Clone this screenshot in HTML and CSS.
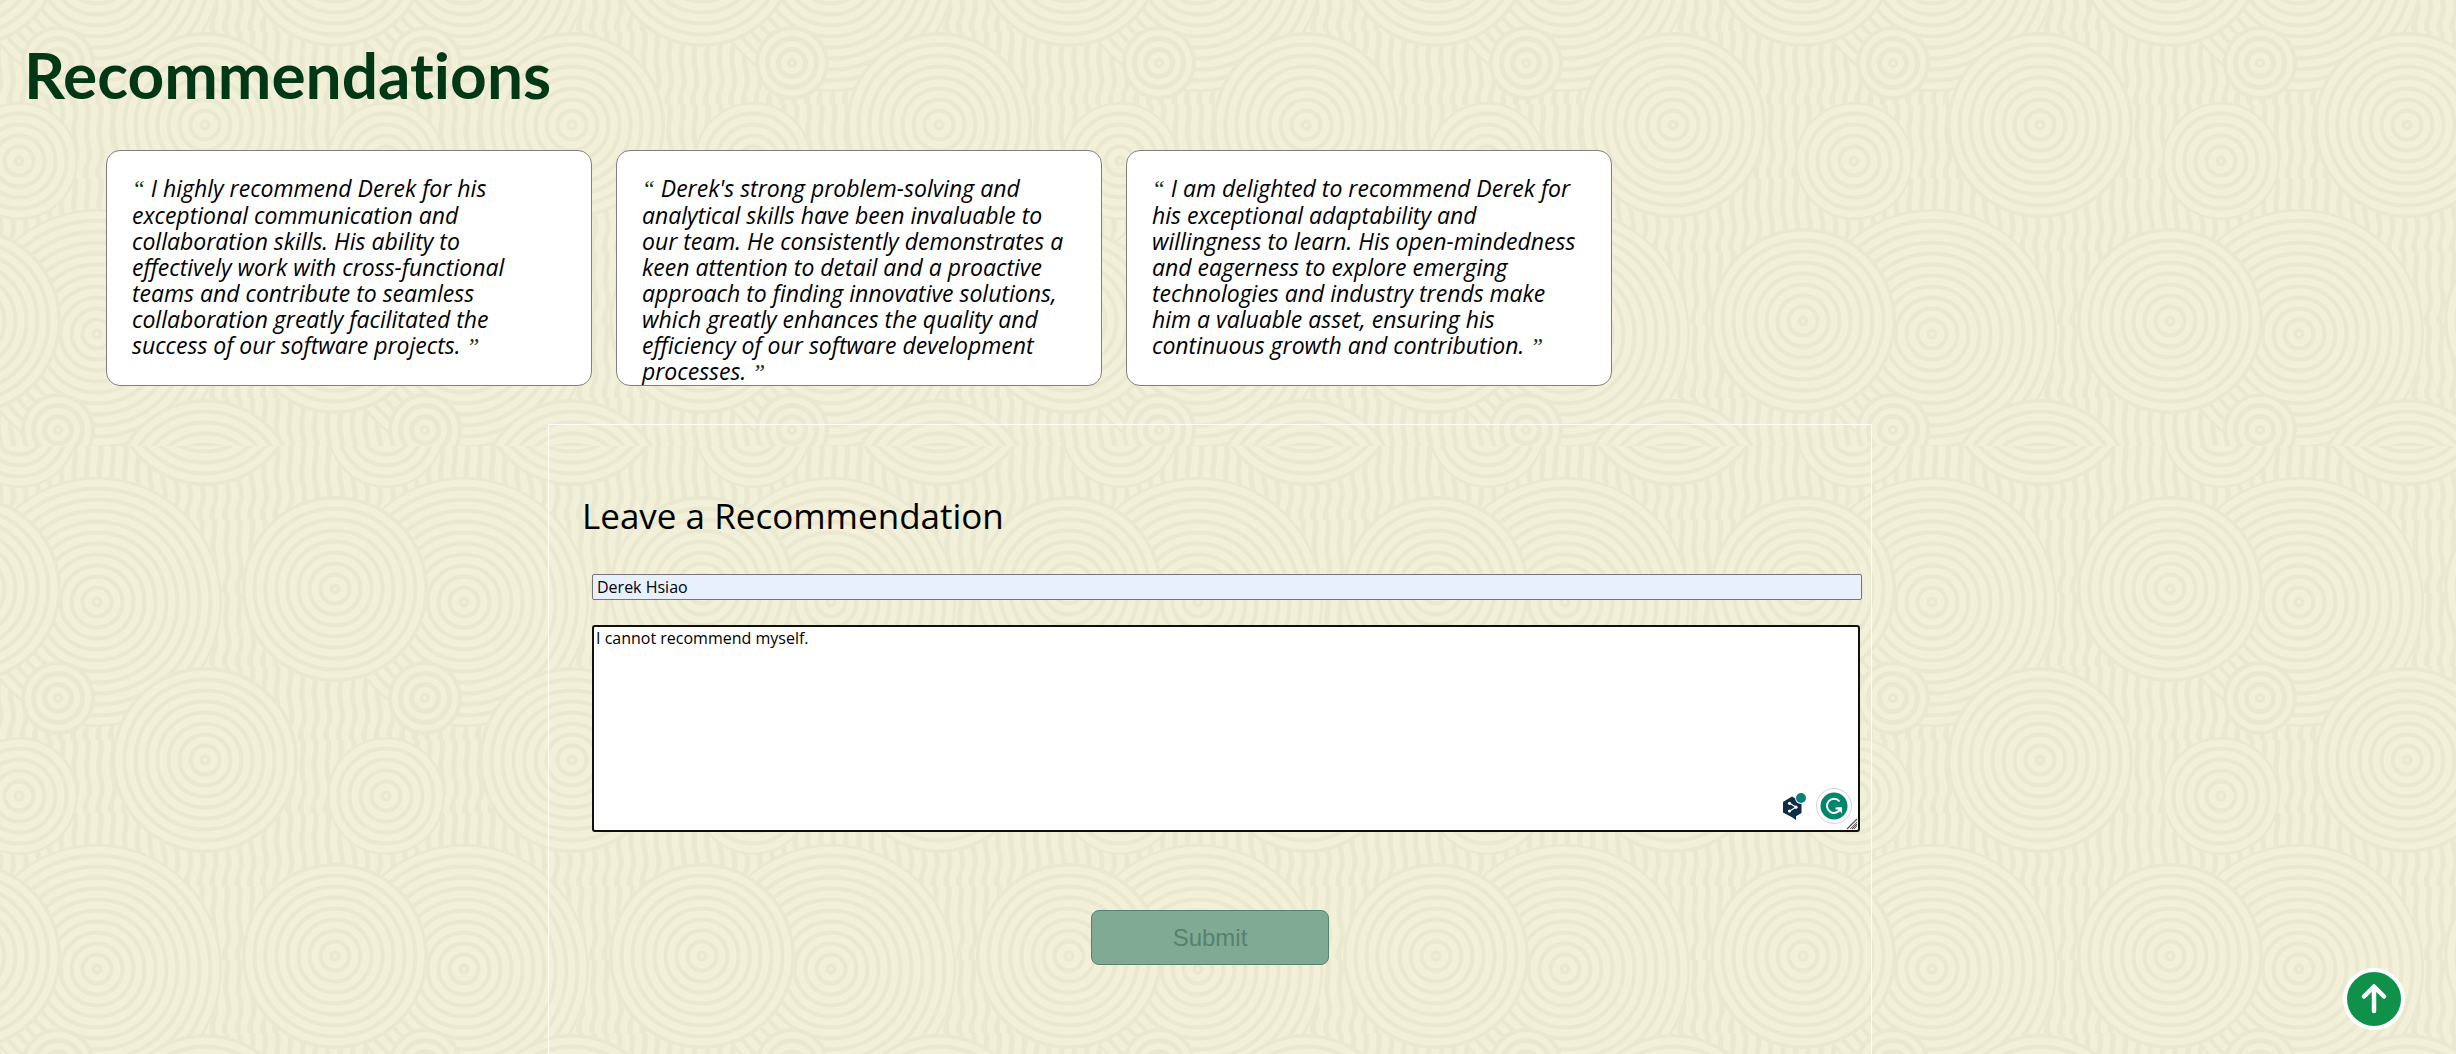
FILE: index.html
```
<!DOCTYPE html>
<html lang="en">
<head>
<meta charset="utf-8">
<meta name="viewport" content="width=device-width, initial-scale=1">
<title>Recommendations</title>
<link rel="stylesheet" href="styles.css">
</head>
<body>
<section class="recommendations">
  <h1 class="page-title">Recommendations</h1>
  <div class="card-row">
    <blockquote class="card"><span class="quote">“</span> I highly recommend Derek for his<br>exceptional communication and<br>collaboration skills. His ability to<br>effectively work with cross-functional<br>teams and contribute to seamless<br>collaboration greatly facilitated the<br>success of our software projects. <span class="quote">”</span></blockquote>
    <blockquote class="card"><span class="quote">“</span> Derek's strong problem-solving and<br>analytical skills have been invaluable to<br>our team. He consistently demonstrates a<br>keen attention to detail and a proactive<br>approach to finding innovative solutions,<br>which greatly enhances the quality and<br>efficiency of our software development<br>processes. <span class="quote">”</span></blockquote>
    <blockquote class="card"><span class="quote">“</span> I am delighted to recommend Derek for<br>his exceptional adaptability and<br>willingness to learn. His open-mindedness<br>and eagerness to explore emerging<br>technologies and industry trends make<br>him a valuable asset, ensuring his<br>continuous growth and contribution. <span class="quote">”</span></blockquote>
  </div>
</section>
<main class="form-area">
  <form class="form">
    <h2 class="form-title">Leave a Recommendation</h2>
    <div class="fields">
      <input class="field name" type="text" value="Derek Hsiao" aria-label="Name">
      <div class="message-box">
        <textarea class="field message" aria-label="Message">I cannot recommend myself.</textarea>
        <div class="assistants">
          <svg width="26" height="28" viewBox="0 0 26 28" aria-hidden="true">
            <path d="M11 4.500 20.500 10V21L15 24.200V28L11.500 25.600 2 20.600V10Z" fill="#0f2b46"/>
            <path d="M8 11 15 15 8 19.500" fill="none" stroke="#fff" stroke-width="1.200"/>
            <circle cx="8.500" cy="11.300" r="1.600" fill="#fff"/><circle cx="15" cy="15.200" r="1.600" fill="#fff"/><circle cx="8.500" cy="19" r="1.600" fill="#fff"/>
            <circle cx="20" cy="6" r="6" fill="#fff"/><circle cx="20" cy="6" r="5" fill="#0b8074"/>
          </svg>
          <svg width="38" height="38" viewBox="0 0 38 38" aria-hidden="true">
            <circle cx="19" cy="19" r="17.500" fill="#fff" stroke="#cfd2e0"/>
            <circle cx="19" cy="19" r="13.500" fill="#00856f"/>
            <path d="M24.500 14.500A7 7 0 1 0 25.500 21.500H20.500" fill="none" stroke="#fff" stroke-width="2"/>
            <path d="M21.500 20.500H27V26.500Z" fill="#fff"/>
          </svg>
        </div>
        <svg class="grip" width="12" height="12" viewBox="0 0 12 12" aria-hidden="true"><path d="M1 11 11 1M6 11 11 6" fill="none" stroke="#555" stroke-width="1.300"/></svg>
      </div>
    </div>
    <button class="submit" type="submit" disabled>Submit</button>
  </form>
</main>
<button class="to-top" type="button" aria-label="Back to top">
  <svg width="54" height="54" viewBox="0 0 54 54" aria-hidden="true">
    <path d="M27 39V15M17 24.500 27 14.500 37 24.500" fill="none" stroke="#fff" stroke-width="4.500" stroke-linecap="round" stroke-linejoin="round"/>
  </svg>
</button>
</body>
</html>
```
FILE: styles.css
```
:root {
  --tile: url("data:image/svg+xml,%3Csvg xmlns='http://www.w3.org/2000/svg' xmlns:xlink='http://www.w3.org/1999/xlink' width='367' height='367'%3E%3Cdefs%3E%3Cpattern id='w' width='12.655' height='73.4' patternUnits='userSpaceOnUse'%3E%3Cpath d='M5 -5Q7 8 5 18T6 40T5 60T5 80' fill='none' stroke='%23f2f0d8' stroke-width='7.5'/%3E%3C/pattern%3E%3Cg id='d'%3E%3Ccircle r='125' fill='%23eae8d0'/%3E%3Cg fill='none' stroke='%23f2f0d8' stroke-width='7'%3E%3Ccircle r='119'/%3E%3Ccircle r='108'/%3E%3Ccircle r='97'/%3E%3Ccircle r='86'/%3E%3Ccircle r='75'/%3E%3Ccircle r='64'/%3E%3Ccircle r='53'/%3E%3Ccircle r='42'/%3E%3Ccircle r='31'/%3E%3Ccircle r='20'/%3E%3Ccircle r='9'/%3E%3C/g%3E%3Ccircle r='2' fill='%23f2f0d8'/%3E%3C/g%3E%3Cg id='a'%3E%3Ccircle r='93' fill='%23eae8d0'/%3E%3Cg fill='none' stroke='%23f2f0d8' stroke-width='7'%3E%3Ccircle r='86'/%3E%3Ccircle r='75'/%3E%3Ccircle r='64'/%3E%3Ccircle r='53'/%3E%3Ccircle r='42'/%3E%3Ccircle r='31'/%3E%3Ccircle r='20'/%3E%3Ccircle r='9'/%3E%3C/g%3E%3Ccircle r='2' fill='%23f2f0d8'/%3E%3C/g%3E%3Cg id='b'%3E%3Ccircle r='59' fill='%23eae8d0'/%3E%3Cg fill='none' stroke='%23f2f0d8' stroke-width='7'%3E%3Ccircle r='53'/%3E%3Ccircle r='42'/%3E%3Ccircle r='31'/%3E%3Ccircle r='20'/%3E%3Ccircle r='9'/%3E%3C/g%3E%3Ccircle r='2' fill='%23f2f0d8'/%3E%3C/g%3E%3Cg id='s'%3E%3Ccircle r='37' fill='%23eae8d0'/%3E%3Cg fill='none' stroke='%23f2f0d8' stroke-width='6'%3E%3Ccircle r='30'/%3E%3Ccircle r='19'/%3E%3Ccircle r='8'/%3E%3C/g%3E%3Ccircle r='2' fill='%23f2f0d8'/%3E%3C/g%3E%3C/defs%3E%3Crect width='367' height='367' fill='%23eae8d0'/%3E%3Crect width='367' height='367' fill='url(%23w)'/%3E%3Cuse xlink:href='%23d' x='97' y='156'/%3E%3Cuse xlink:href='%23d' x='464' y='156'/%3E%3Cuse xlink:href='%23a' x='335' y='143'/%3E%3Cuse xlink:href='%23a' x='-32' y='143'/%3E%3Cuse xlink:href='%23a' x='205' y='314'/%3E%3Cuse xlink:href='%23a' x='205' y='-53'/%3E%3Cuse xlink:href='%23b' x='19' y='350'/%3E%3Cuse xlink:href='%23b' x='386' y='350'/%3E%3Cuse xlink:href='%23b' x='19' y='-17'/%3E%3Cuse xlink:href='%23b' x='386' y='-17'/%3E%3Cuse xlink:href='%23s' x='58' y='252'/%3E%3C/svg%3E");
}

* { box-sizing: border-box; }

body {
  margin: 0;
  min-height: 100vh;
  display: flex;
  flex-direction: column;
  font-family: "Trebuchet MS", "Open Sans", sans-serif;
  color: #000;
  background: #eae8d0 var(--tile) 0 79px;
}

.recommendations {
  padding: 38px 24px 60px;
  background: var(--tile) 0 178px;
}

.page-title {
  margin: 0 0 38px;
  font-family: "Trebuchet MS", Lato, sans-serif;
  font-size: 64px;
  font-weight: 700;
  line-height: 74px;
  font-variant-ligatures: none;
  color: #003816;
}

.card-row {
  display: flex;
  gap: 24px;
  padding: 0 82px;
}

.card {
  flex: 0 1 486px;
  height: 236px;
  margin: 0;
  padding: 24px 25px;
  overflow: hidden;
  border: 1px solid #808080;
  border-radius: 14px;
  background: #fff;
  font-size: 23px;
  font-style: italic;
  line-height: 26px;
  white-space: nowrap;
}

.quote {
  font-family: "Liberation Serif", serif;
  line-height: 24px;
  color: #003816;
}

.form-area {
  flex: 1;
  display: flex;
  justify-content: center;
  margin-top: -22px;
  padding-right: 36px;
}

.form {
  width: 1324px;
  display: flex;
  flex-direction: column;
  align-items: center;
  padding: 70px 9px 80px;
  border: 1px solid #fff;
  border-bottom: 0;
}

.form-title {
  align-self: stretch;
  margin: 0 24px 37px;
  font-size: 35px;
  font-weight: 400;
  line-height: 42px;
}

.fields {
  align-self: stretch;
  display: flex;
  flex-direction: column;
  gap: 25px;
  padding: 0 0 0 34px;
}

.field {
  display: block;
  width: 100%;
  font: 16px/20px "Trebuchet MS", "Open Sans", sans-serif;
  color: #000;
}

.name {
  height: 26px;
  padding: 2px 4px;
  border: 1px solid #767676;
  border-radius: 2px;
  background: #e8f0fe;
}

.message-box {
  position: relative;
  margin-right: 2px;
}

.message {
  height: 207px;
  padding: 1px 2px;
  border: 2px solid #101010;
  border-radius: 3px;
  background: #fff;
}

.assistants {
  position: absolute;
  right: 7px;
  bottom: 7px;
  display: flex;
  align-items: center;
  gap: 8px;
}

.grip {
  position: absolute;
  right: 2px;
  bottom: 2px;
  pointer-events: none;
}

.submit {
  width: 238px;
  height: 55px;
  margin-top: 78px;
  border: 1px solid #568170;
  border-radius: 8px;
  background: #81aa94;
  color: #568170;
  font: 24px/28px "Liberation Sans", Arial, sans-serif;
}

.to-top {
  position: fixed;
  right: 51px;
  bottom: 24px;
  width: 62px;
  height: 62px;
  padding: 0;
  border: 4px solid #fff;
  border-radius: 50%;
  background: #109149;
}

.to-top svg { display: block; }
```
